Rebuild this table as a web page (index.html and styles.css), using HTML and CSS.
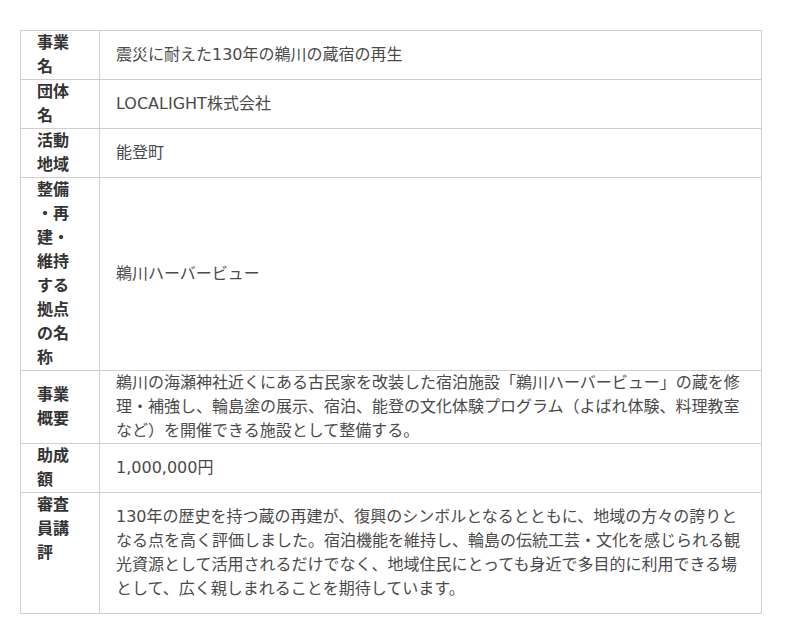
FILE: index.html
```html
<!DOCTYPE html>
<html lang="ja">
<head>
  <meta charset="UTF-8">
  <title>事業概要</title>
  <link rel="stylesheet" href="styles.css">
</head>
<body>
  <table class="info">
    <tr>
      <th>事業名</th>
      <td>震災に耐えた130年の鵜川の蔵宿の再生</td>
    </tr>
    <tr>
      <th>団体名</th>
      <td>LOCALIGHT株式会社</td>
    </tr>
    <tr>
      <th>活動地域</th>
      <td>能登町</td>
    </tr>
    <tr>
      <th>整備・再建・維持する拠点の名称</th>
      <td>鵜川ハーバービュー</td>
    </tr>
    <tr>
      <th>事業概要</th>
      <td>鵜川の海瀬神社近くにある古民家を改装した宿泊施設「鵜川ハーバービュー」の蔵を修理・補強し、輪島塗の展示、宿泊、能登の文化体験プログラム（よばれ体験、料理教室など）を開催できる施設として整備する。</td>
    </tr>
    <tr>
      <th>助成額</th>
      <td>1,000,000円</td>
    </tr>
    <tr class="review">
      <th>審査員講評</th>
      <td>130年の歴史を持つ蔵の再建が、復興のシンボルとなるとともに、地域の方々の誇りとなる点を高く評価しました。宿泊機能を維持し、輪島の伝統工芸・文化を感じられる観光資源として活用されるだけでなく、地域住民にとっても身近で多目的に利用できる場として、広く親しまれることを期待しています。</td>
    </tr>
  </table>
</body>
</html>
```

FILE: styles.css
```css
* {
  box-sizing: content-box;
}

body {
  margin: 0;
  padding: 30px 20px;
  background: #fff;
  font-family: "DejaVu Sans", "Noto Sans CJK JP", sans-serif;
  font-size: 16px;
  line-height: 24px;
  color: #4a4a4a;
}

.info {
  width: 741px;
  border-collapse: collapse;
}

.info th,
.info td {
  border: 1px solid #cfcfcf;
  vertical-align: middle;
}

.info th {
  width: 46px;
  padding: 0 16px;
  text-align: left;
  font-weight: bold;
  color: #333;
  line-break: anywhere;
}

.info td {
  padding: 0 16px;
}

.review th {
  vertical-align: top;
}

.review td {
  padding: 12px 16px;
}
```
